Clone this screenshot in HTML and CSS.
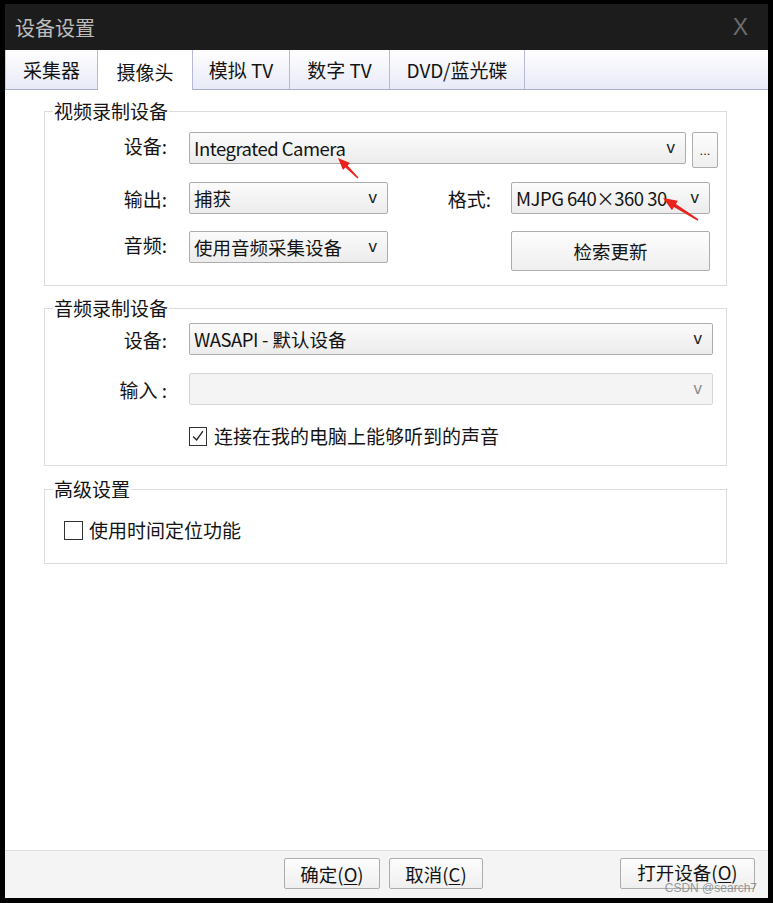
FILE: index.html
```html
<!DOCTYPE html>
<html lang="zh-CN">
<head>
<meta charset="utf-8">
<title>设备设置</title>
<link rel="stylesheet" href="styles.css">
</head>
<body>
<div class="window">
  <div class="titlebar">
    <span class="title">设备设置</span>
    <span class="close">X</span>
  </div>
  <div class="tabs">
    <div class="tab t1">采集器</div>
    <div class="tab t2 active">摄像头</div>
    <div class="tab t3">模拟 TV</div>
    <div class="tab t4">数字 TV</div>
    <div class="tab t5">DVD/蓝光碟</div>
  </div>
  <div class="content">
    <fieldset class="group g1">
      <legend>视频录制设备</legend>
      <div class="row r1">
        <span class="lbl">设备:</span>
        <div class="combo grow"><span class="lat">Integrated Camera</span><span class="v">v</span></div>
        <div class="btn dots">...</div>
      </div>
      <div class="row r2">
        <span class="lbl">输出:</span>
        <div class="combo narrow"><span>捕获</span><span class="v">v</span></div>
        <span class="lbl2">格式:</span>
        <div class="combo narrow"><span class="lat">MJPG 640×360 30</span><span class="v">v</span></div>
      </div>
      <div class="row r3">
        <span class="lbl">音频:</span>
        <div class="combo narrow"><span>使用音频采集设备</span><span class="v">v</span></div>
        <span class="lbl2"></span>
        <div class="btn refresh">检索更新</div>
      </div>
    </fieldset>

    <fieldset class="group g2">
      <legend>音频录制设备</legend>
      <div class="row r4">
        <span class="lbl">设备:</span>
        <div class="combo grow"><span><span class="lat">WASAPI</span> - 默认设备</span><span class="v">v</span></div>
      </div>
      <div class="row r5">
        <span class="lbl">输入 :</span>
        <div class="combo grow disabled"><span></span><span class="v">v</span></div>
      </div>
      <div class="row r6">
        <span class="lbl"></span>
        <span class="check checked"><svg viewBox="0 0 18 18" width="18" height="18"><path d="M3.5 9.5 L7.5 13.5 L14.5 3.5" fill="none" stroke="#222" stroke-width="1.5"/></svg></span>
        <span class="ctext">连接在我的电脑上能够听到的声音</span>
      </div>
    </fieldset>

    <fieldset class="group g3">
      <legend>高级设置</legend>
      <div class="row r7">
        <span class="check big"></span>
        <span class="ctext">使用时间定位功能</span>
      </div>
    </fieldset>
  </div>
  <div class="footer">
    <div class="btn ok">确定(<u>O</u>)</div>
    <div class="btn cancel">取消(<u>C</u>)</div>
    <div class="btn open">打开设备(<u>O</u>)</div>
  </div>
  <svg class="arrows" viewBox="0 0 763 894" width="763" height="894">
    <polygon fill="#e8231c" points="333,154 345,159 342.6,161.4 353.5,173.5 352.5,174.5 340.4,163.6 338,166"/>
    <polygon fill="#e8231c" points="658,194 672.8,196.8 670.9,200 693.4,215.3 692.6,216.7 668.9,203 667,206.2"/>
  </svg>
  <div class="watermark">CSDN @search7</div>
</div>
</body>
</html>
```
FILE: styles.css
```css
html, body {
  margin: 0;
  background: #000;
}
body {
  width: 773px;
  height: 903px;
  overflow: hidden;
  padding: 4px 0 0 5px;
  box-sizing: border-box;
  font-family: "Noto Sans CJK SC", "Noto Sans", sans-serif;
  color: #141414;
}
.window {
  position: relative;
  width: 763px;
  height: 894px;
  background: #fff;
  display: flex;
  flex-direction: column;
}
.titlebar {
  height: 46px;
  flex: none;
  background: #1c1c1c;
  display: flex;
  align-items: center;
  justify-content: space-between;
  padding: 0 20px 0 10px;
}
.title {
  color: #bdbdbd;
  font-size: 20px;
}
.close {
  color: #6c6c6c;
  font-family: "Liberation Sans", sans-serif;
  font-size: 23px;
}
.tabs {
  height: 39px;
  flex: none;
  display: flex;
  background: linear-gradient(#ffffff, #e8eaf7);
  border-bottom: 1px solid #a9adcf;
}
.tab {
  box-sizing: border-box;
  font-size: 19px;
  line-height: 39px;
  text-align: center;
  border-right: 1px solid #b7bad6;
}
.t1 { width: 93px; border-left: 1px solid #c9cce2; }
.t2 { width: 95px; }
.t3 { width: 97px; }
.t4 { width: 100px; }
.t5 { width: 135px; }
.tab.active {
  background: #fff;
  height: 40px;
  margin-bottom: -1px;
  line-height: 43px;
}
.content {
  flex: 1;
  padding: 9px 41px 0 39px;
}
.group {
  margin: 0;
  padding: 0;
  border: 1px solid #dcdcdc;
  min-width: 0;
}
.group legend {
  margin-left: 8px;
  padding: 0 1px;
  font-size: 19px;
  line-height: 24px;
}
.g1 { padding: 0 8px 14px 0; }
.g2 { margin-top: 10px; padding: 0 13px 19px 0; }
.g3 { margin-top: 11px; padding: 0 0 23px 0; }
.row {
  display: flex;
  align-items: center;
  font-size: 19px;
}
.r1 { align-items: flex-start; margin-top: 9px; }
.r2 { margin-top: 14px; }
.r3 { align-items: flex-start; margin-top: 17px; }
.r4 { margin-top: 3px; }
.r5 { margin-top: 18px; }
.r6 { margin-top: 21px; }
.r7 { margin-top: 19px; padding-left: 19px; }
.lbl {
  width: 122px;
  margin-right: 22px;
  text-align: right;
  flex: none;
}
.lbl2 {
  width: 103px;
  margin-right: 20px;
  text-align: right;
  flex: none;
}
.combo {
  box-sizing: border-box;
  height: 32px;
  border: 1px solid #adadad;
  border-radius: 2px;
  background: linear-gradient(#fbfbfb, #ececec);
  display: flex;
  align-items: center;
  justify-content: space-between;
  padding: 0 10px 0 4px;
  font-size: 18.5px;
  white-space: nowrap;
}
.lat { letter-spacing: -0.5px; }
.combo.grow { flex: 1; }
.combo.narrow { width: 199px; flex: none; }
.combo.disabled {
  border-color: #d6d6d6;
  background: #f4f4f4;
}
.v {
  font-family: "Liberation Sans", sans-serif;
  font-size: 17px;
  color: #1d1d1d;
}
.disabled .v { color: #8c8c8c; }
.btn {
  box-sizing: border-box;
  border: 1px solid #adadad;
  border-radius: 2px;
  background: linear-gradient(#fdfdfd, #efefef);
  display: flex;
  align-items: center;
  justify-content: center;
  font-size: 18.5px;
  flex: none;
}
.dots {
  width: 26px;
  height: 36px;
  margin-left: 6px;
  font-family: "Liberation Sans", sans-serif;
  font-size: 13px;
  align-items: flex-end;
  padding-bottom: 9px;
}
.refresh {
  width: 199px;
  height: 40px;
}
.check {
  box-sizing: border-box;
  width: 18px;
  height: 19px;
  border: 1.5px solid #333;
  background: #fff;
  flex: none;
  display: flex;
  align-items: center;
  justify-content: center;
}
.check svg { display: block; }
.check.big { width: 19px; height: 19px; }
.ctext { margin-left: 7px; line-height: 20px; }
.r7 .ctext { margin-left: 6px; }
.footer {
  height: 40px;
  flex: none;
  background: #f4f4f4;
  border-top: 1px solid #dedede;
  display: flex;
  align-items: flex-start;
  padding: 7px 13px 0 279px;
  box-sizing: content-box;
}
.ok { width: 96px; height: 31px; }
.cancel { width: 94px; height: 31px; margin-left: 9px; }
.open { width: 135px; height: 31px; margin-left: auto; line-height: 1; padding-bottom: 3px; }
.btn u { text-decoration-thickness: 1px; text-underline-offset: 2px; }
.arrows {
  position: absolute;
  left: 0;
  top: 0;
  pointer-events: none;
}
.watermark {
  position: absolute;
  right: 11px;
  bottom: 3px;
  font-family: "Liberation Sans", sans-serif;
  font-size: 12px;
  color: rgba(120, 120, 120, 0.75);
}
```
